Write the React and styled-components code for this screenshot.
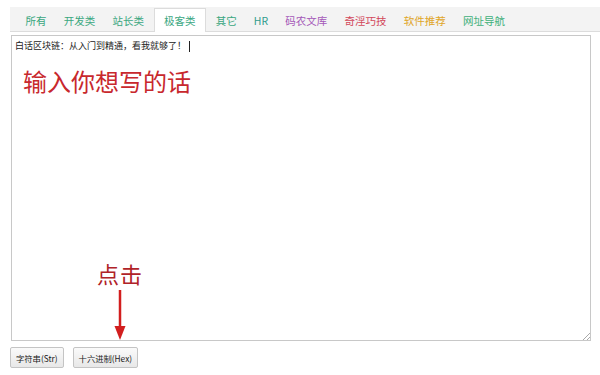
import styled, { createGlobalStyle } from 'styled-components';

const GlobalStyle = createGlobalStyle`
  body {
    margin: 0;
    background: #fff;
    font-family: "Noto Sans CJK SC", "Noto Sans", sans-serif;
  }
`;

const tabs = [
  { label: '所有', color: '#3aa77f' },
  { label: '开发类', color: '#3aa77f' },
  { label: '站长类', color: '#3aa77f' },
  { label: '极客类', color: '#3aa77f', active: true },
  { label: '其它', color: '#3aa77f' },
  { label: 'HR', color: '#2f9c8c' },
  { label: '码农文库', color: '#a457b8' },
  { label: '奇淫巧技', color: '#d2475a' },
  { label: '软件推荐', color: '#e0a528' },
  { label: '网址导航', color: '#3fb07a' },
];

function App() {
  return (
    <Page>
      <GlobalStyle />
      <TabBar>
        {tabs.map((t) => (
          <Tab key={t.label} $color={t.color} $active={t.active}>
            {t.label}
          </Tab>
        ))}
      </TabBar>
      <Editor>
        <FirstLine>
          白话区块链：从入门到精通，看我就够了！<Caret />
        </FirstLine>
        <Hint>输入你想写的话</Hint>
        <ClickNote>
          <span>点击</span>
          <svg width="14" height="50" viewBox="0 0 14 50">
            <path d="M7 0 L7 38" stroke="#d21e1e" strokeWidth="2.5" />
            <path d="M1.5 36 L12.5 36 L7 50 Z" fill="#d21e1e" />
          </svg>
        </ClickNote>
        <Grip width="8" height="8" viewBox="0 0 8 8">
          <path d="M8 1 L1 8 M8 5 L5 8" stroke="#aaa" strokeWidth="1" />
        </Grip>
      </Editor>
      <Buttons>
        <Button>字符串(Str)</Button>
        <Button>十六进制(Hex)</Button>
      </Buttons>
    </Page>
  );
}

const Page = styled.div`
  width: 600px;
  height: 375px;
  padding-top: 7px;
  box-sizing: border-box;
`;

const TabBar = styled.div`
  margin-left: 10px;
  height: 24px;
  display: flex;
  align-items: flex-end;
  padding-left: 7px;
  background: #f3f3f3;
  border-bottom: 1px solid #dcdcdc;
`;

const Tab = styled.div`
  padding: 0 8.6px;
  height: ${(p) => (p.$active ? '24px' : '22px')};
  line-height: 22px;
  font-size: 10.5px;
  color: ${(p) => p.$color};
  box-sizing: border-box;
  margin-bottom: -1px;
  ${(p) =>
    p.$active &&
    `
    background: #fff;
    border: 1px solid #dcdcdc;
    border-bottom: none;
    margin: 0 1px -1px;
    line-height: 24px;
    padding: 0 9.5px;
  `}
`;

const Editor = styled.div`
  position: relative;
  margin: 3px 9px 0 11px;
  height: 306px;
  border: 1px solid #c8c8c8;
  box-sizing: border-box;
  padding: 4px 3px;
`;

const FirstLine = styled.div`
  font-size: 9px;
  line-height: 12px;
  color: #222;
  display: flex;
  align-items: center;
`;

const Caret = styled.span`
  display: inline-block;
  width: 1px;
  height: 11px;
  background: #222;
  margin-left: 3px;
`;

const Hint = styled.div`
  margin: 14px 0 0 8px;
  font-size: 24px;
  line-height: 30px;
  color: #c8282d;
`;

const ClickNote = styled.div`
  position: absolute;
  left: 85px;
  top: 224px;
  display: flex;
  flex-direction: column;
  align-items: center;
  font-size: 22px;
  line-height: 26px;
  color: #b02328;
  span {
    letter-spacing: 1px;
  }
  svg {
    margin-top: 4px;
  }
`;

const Grip = styled.svg`
  position: absolute;
  right: 0;
  bottom: 0;
`;

const Buttons = styled.div`
  display: flex;
  gap: 9px;
  margin: 6px 0 0 10px;
`;

const Button = styled.button`
  height: 21px;
  padding: 0 5px;
  font-family: "Noto Sans CJK SC", "Noto Sans", sans-serif;
  font-size: 8.3px;
  color: #222;
  background: linear-gradient(#fafafa, #e8e8e8);
  border: 1px solid #c4c4c4;
  border-radius: 2px;
`;

export default App;
